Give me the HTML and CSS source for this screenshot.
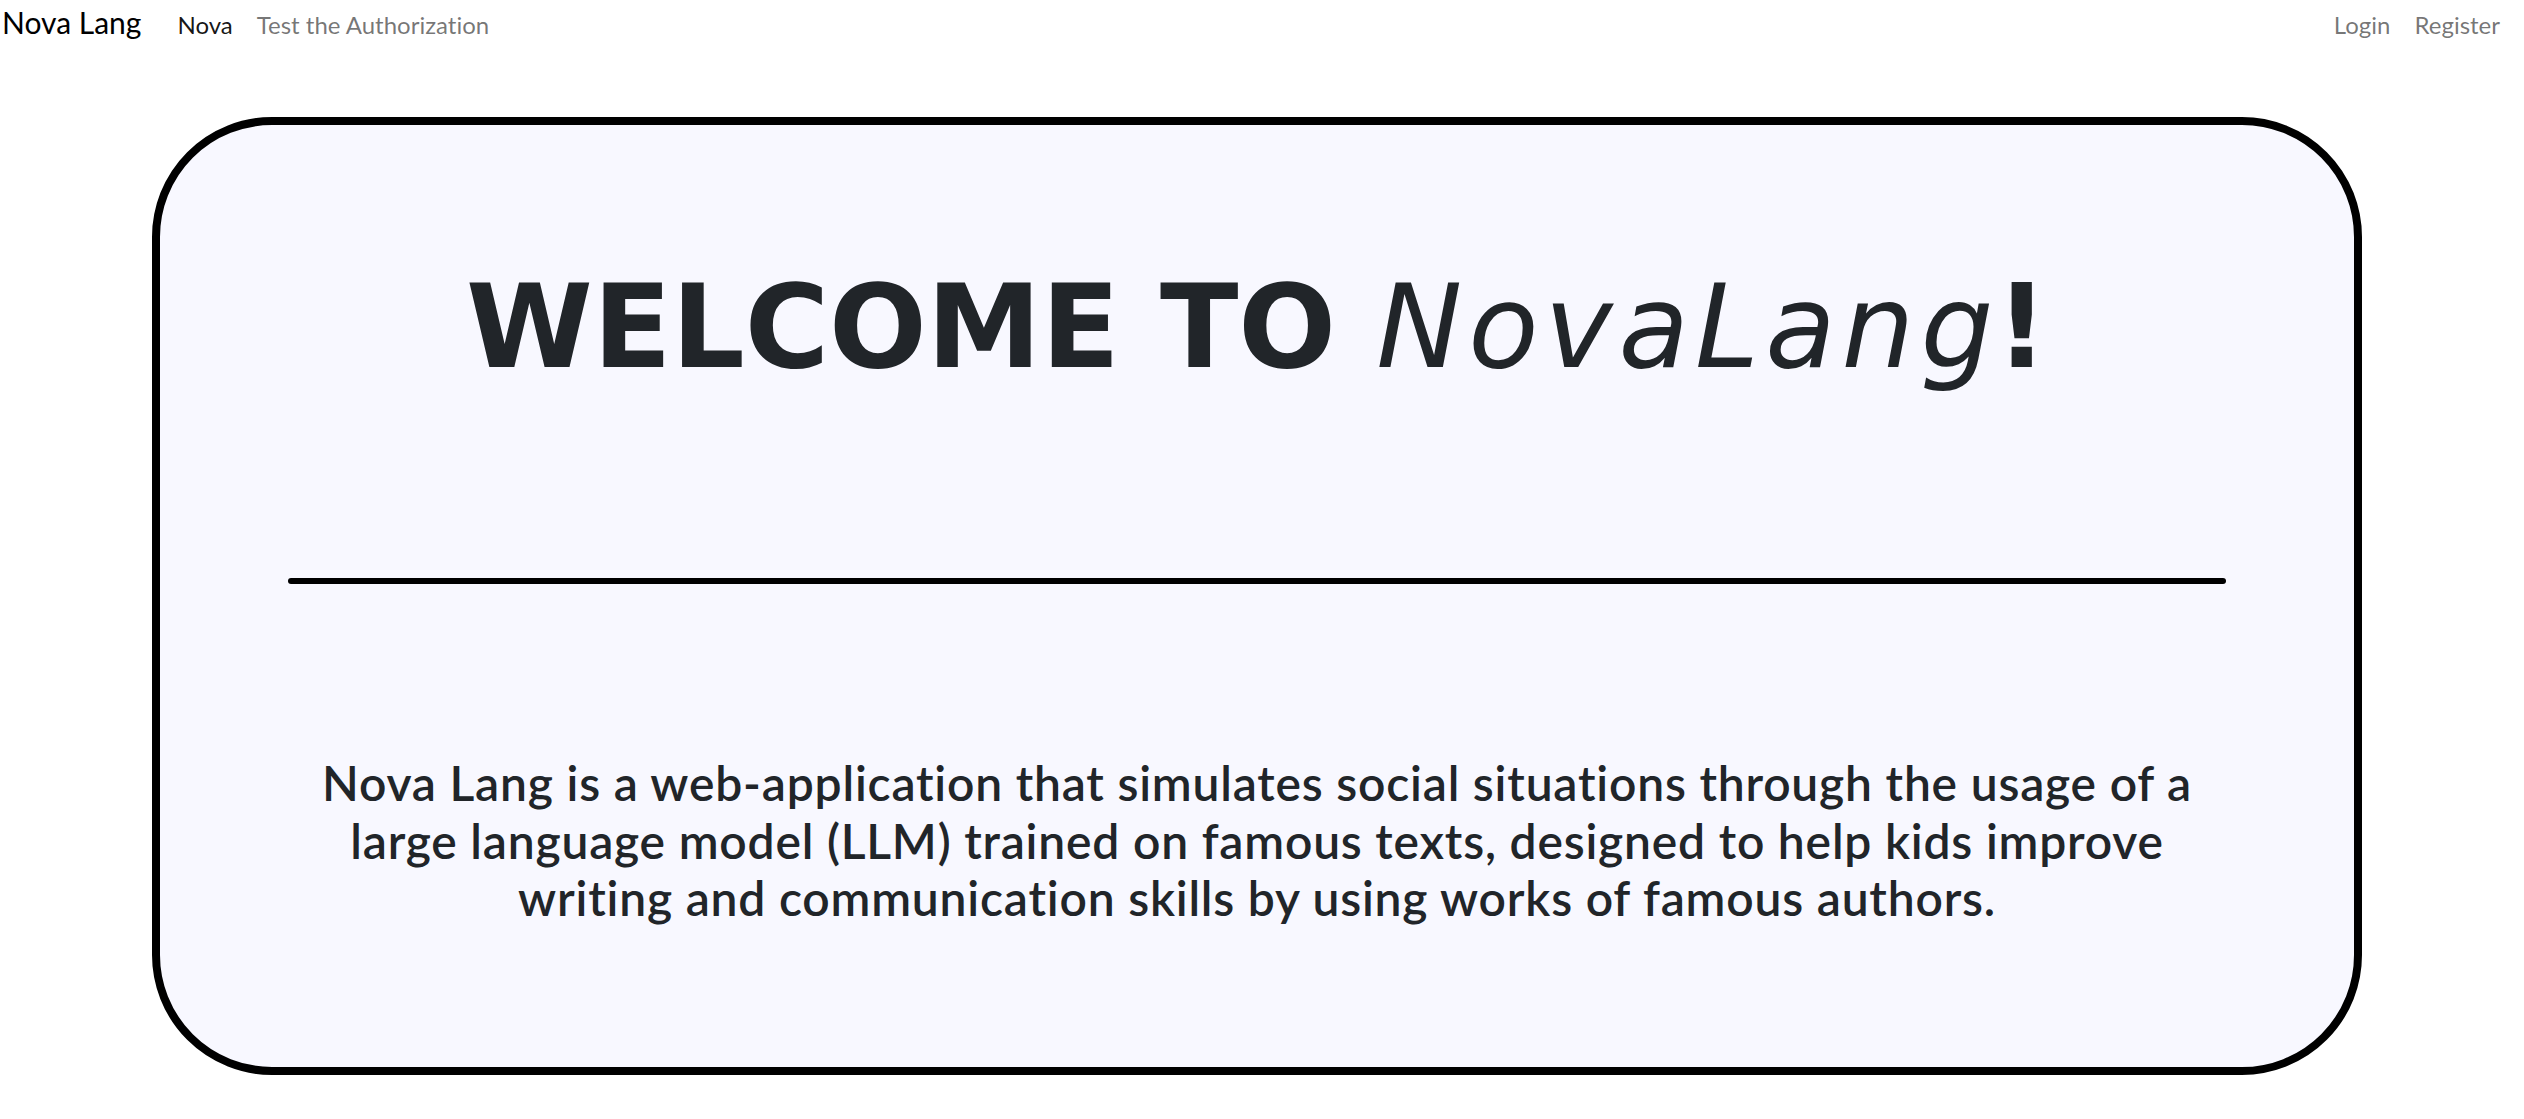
FILE: index.html
```html
<!DOCTYPE html>
<html lang="en">
<head>
<meta charset="utf-8">
<title>Nova Lang</title>
<link rel="stylesheet" href="styles.css">
</head>
<body>
<nav class="navbar">
  <a class="brand" href="#">Nova Lang</a>
  <ul class="nav nav-main">
    <li><a class="nav-link active" href="#">Nova</a></li>
    <li><a class="nav-link" href="#">Test the Authorization</a></li>
  </ul>
  <ul class="nav nav-auth">
    <li><a class="nav-link" href="#">Login</a></li>
    <li><a class="nav-link" href="#">Register</a></li>
  </ul>
</nav>
<main class="page">
  <section class="card">
    <h1 class="title">WELCOME TO <em class="title-em">NovaLang</em>!</h1>
    <div class="divider"></div>
    <p class="intro">Nova Lang is a web-application that simulates social situations through the usage of a large language model (LLM) trained on famous texts, designed to help kids improve writing and communication skills by using works of famous authors.</p>
  </section>
</main>
</body>
</html>
```
FILE: styles.css
```css
* { box-sizing: border-box; }
html, body { margin: 0; padding: 0; background: #ffffff; }
body {
  font-family: Lato, "Open Sans", sans-serif;
  color: #212529;
  font-variant-ligatures: none;
}
a { text-decoration: none; }

.navbar {
  display: flex;
  align-items: baseline;
  height: 52px;
  padding: 0 12px 0 2px;
}
.brand {
  font-size: 30px;
  line-height: 45px;
  color: #000;
  margin-right: 24px;
}
.nav {
  display: flex;
  align-items: baseline;
  list-style: none;
  margin: 0;
  padding: 0;
}
.nav-auth { margin-left: auto; }
.nav-link {
  display: block;
  font-size: 24px;
  line-height: 36px;
  padding: 0 12px;
  color: rgba(0, 0, 0, 0.55);
}
.nav-link.active { color: rgba(0, 0, 0, 0.92); }

.page {
  padding: 65px 162px 0 152px;
}
.card {
  background: #f8f8ff;
  border: 8px solid #000;
  border-radius: 120px;
  padding: 133px 128px 140px;
}
.title {
  margin: 0;
  text-align: center;
  font-family: "DejaVu Sans", sans-serif;
  font-weight: 700;
  font-size: 115px;
  line-height: 138px;
  color: #212529;
}
.title-em {
  font-style: italic;
  font-weight: 400;
  letter-spacing: 6px;
  margin-right: -4px;
}
.divider {
  margin-top: 182px;
  height: 6px;
  background: #000;
  border-radius: 3px;
}
.intro {
  margin: 170px 0 0;
  text-align: center;
  font-size: 48px;
  line-height: 57.6px;
  font-weight: 600;
  letter-spacing: 0.8px;
  color: #212529;
}
```
